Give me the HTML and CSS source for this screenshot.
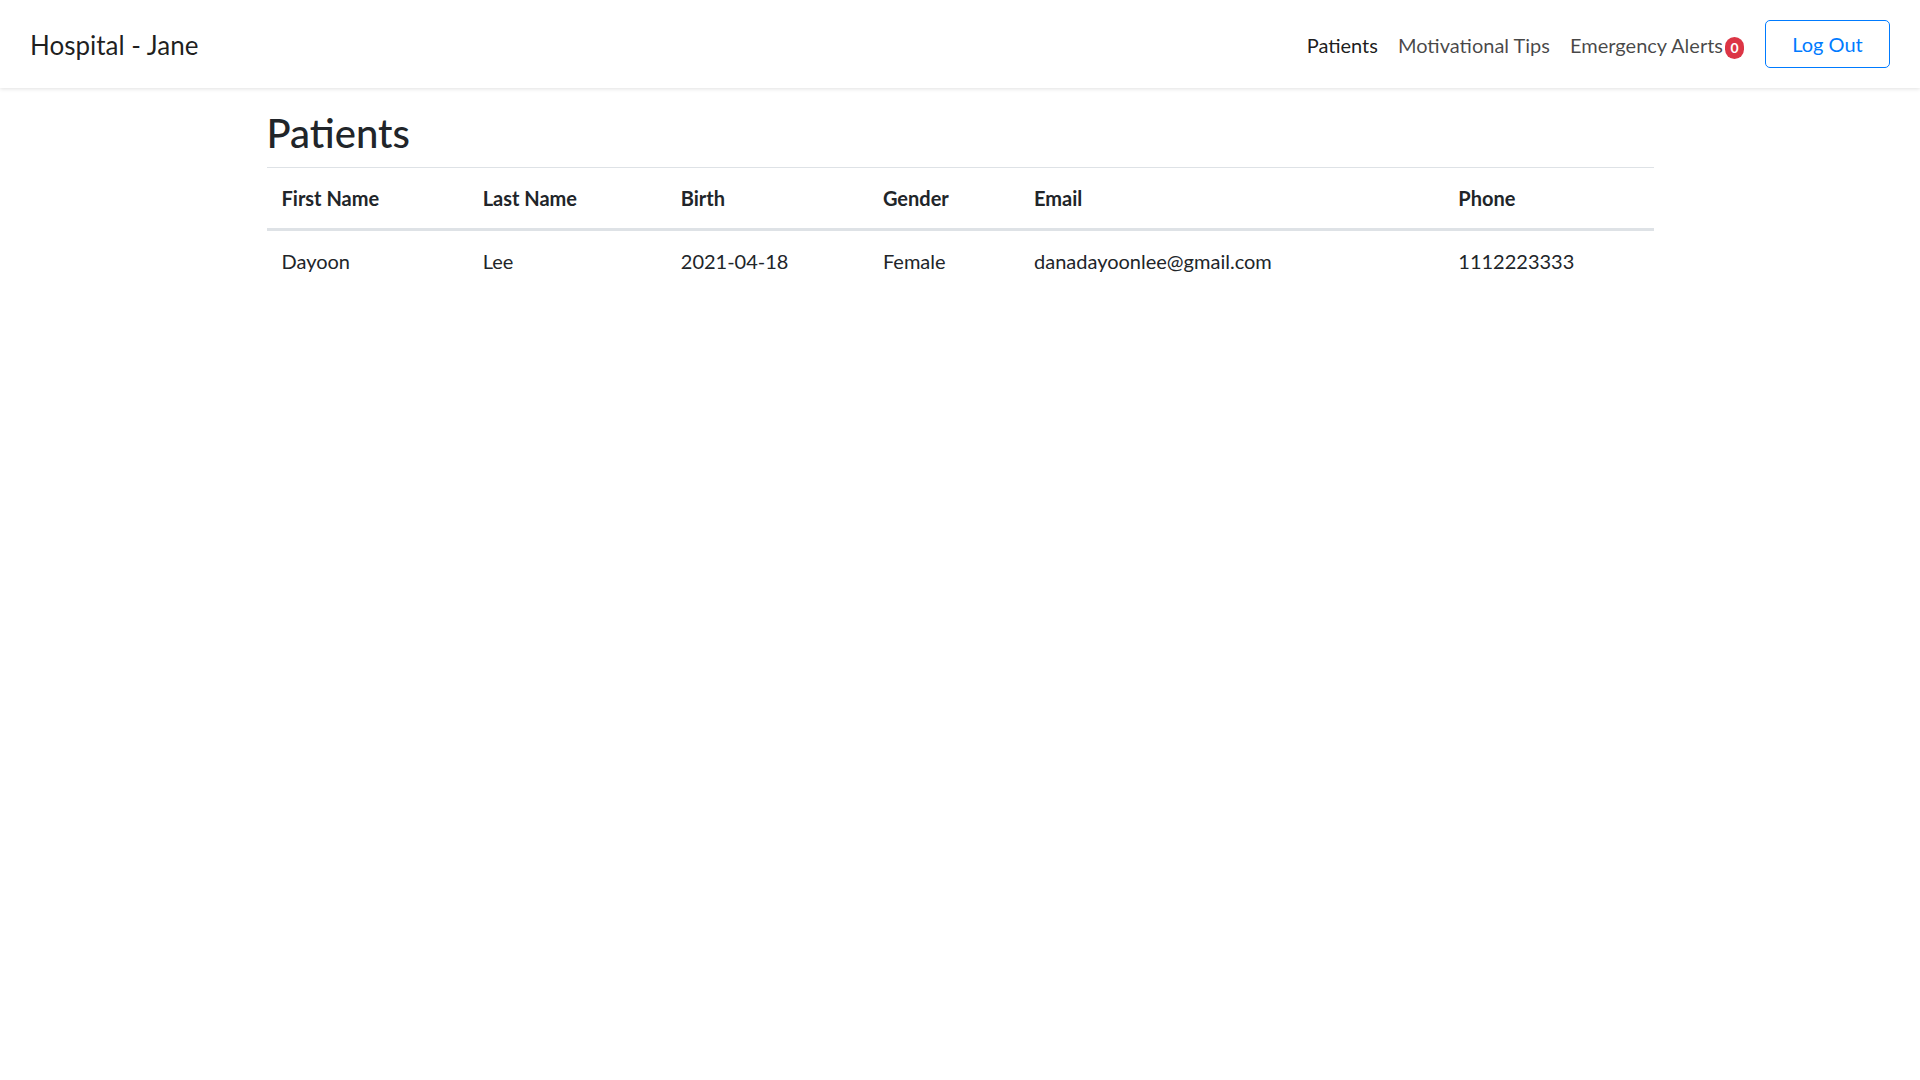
FILE: index.html
```html
<!DOCTYPE html>
<html lang="en">
<head>
<meta charset="utf-8">
<title>Hospital - Jane</title>
<link rel="stylesheet" href="styles.css">
</head>
<body>
<nav class="navbar">
  <a class="brand" href="#">Hospital - Jane</a>
  <div class="nav-right">
    <ul class="nav-links">
      <li><a class="nav-link active" href="#">Patients</a></li>
      <li><a class="nav-link" href="#">Motivational Tips</a></li>
      <li><a class="nav-link" href="#">Emergency Alerts<span class="badge">0</span></a></li>
    </ul>
    <button class="btn-outline" type="button">Log Out</button>
  </div>
</nav>
<main class="container">
  <h2 class="page-title">Patients</h2>
  <table class="table">
    <colgroup>
      <col class="c-first">
      <col class="c-last">
      <col class="c-birth">
      <col class="c-gender">
      <col class="c-email">
      <col class="c-phone">
    </colgroup>
    <thead>
      <tr>
        <th>First Name</th>
        <th>Last Name</th>
        <th>Birth</th>
        <th>Gender</th>
        <th>Email</th>
        <th>Phone</th>
      </tr>
    </thead>
    <tbody>
      <tr>
        <td>Dayoon</td>
        <td>Lee</td>
        <td>2021-04-18</td>
        <td>Female</td>
        <td>danadayoonlee@gmail.com</td>
        <td>1112223333</td>
      </tr>
    </tbody>
  </table>
</main>
</body>
</html>
```
FILE: styles.css
```css
* { box-sizing: border-box; }

html, body {
  margin: 0;
  padding: 0;
  background: #fff;
}

body {
  font-family: Lato, "Open Sans", "Liberation Sans", sans-serif;
  font-size: 20px;
  line-height: 1.5;
  color: #212529;
}

.navbar {
  height: 88px;
  display: flex;
  align-items: center;
  justify-content: space-between;
  padding: 0 30px;
  background: #fff;
  box-shadow: 0 1px 4px rgba(0, 0, 0, 0.12);
  position: relative;
}

.brand {
  font-size: 26px;
  line-height: 1.5;
  color: rgba(0, 0, 0, 0.88);
  text-decoration: none;
  margin-top: 2px;
}

.nav-right {
  display: flex;
  align-items: center;
}

.nav-links {
  display: flex;
  list-style: none;
  margin: 2px 0 0;
  padding: 0;
}

.nav-link {
  display: block;
  padding: 10px 10px;
  color: rgba(0, 0, 0, 0.72);
  text-decoration: none;
  line-height: 30px;
}

.nav-link.active {
  color: rgba(0, 0, 0, 0.9);
}

.badge {
  display: inline-flex;
  align-items: center;
  justify-content: center;
  width: 19px;
  height: 22px;
  margin-left: 2px;
  border-radius: 11px;
  background: #dc3545;
  color: #fff;
  font-size: 14px;
  font-weight: 700;
  line-height: 1;
  vertical-align: 0;
}

.btn-outline {
  margin-left: 11px;
  width: 125px;
  height: 48px;
  padding: 0;
  border: 1px solid #007bff;
  border-radius: 5px;
  background: transparent;
  color: #007bff;
  font-family: inherit;
  font-size: 20px;
  line-height: 30px;
  cursor: pointer;
}

.container {
  width: 1425px;
  margin: 0 auto;
  padding: 21px 19px 0;
}

.page-title {
  margin: 0 0 10px;
  font-size: 40px;
  font-weight: 500;
  line-height: 1.2;
  color: #212529;
}

.table {
  width: 100%;
  border-collapse: collapse;
  table-layout: fixed;
  color: #212529;
}

.c-first { width: 201px; }
.c-last { width: 198px; }
.c-birth { width: 202px; }
.c-gender { width: 151px; }
.c-email { width: 424px; }
.c-phone { width: 210px; }

.table th,
.table td {
  padding: 15px;
  text-align: left;
  vertical-align: top;
  line-height: 30px;
  border-top: 1px solid #dee2e6;
  white-space: nowrap;
}

.table th {
  font-weight: 700;
  border-bottom: 3px solid #dee2e6;
}

.table tbody td {
  border-top: none;
}
```
